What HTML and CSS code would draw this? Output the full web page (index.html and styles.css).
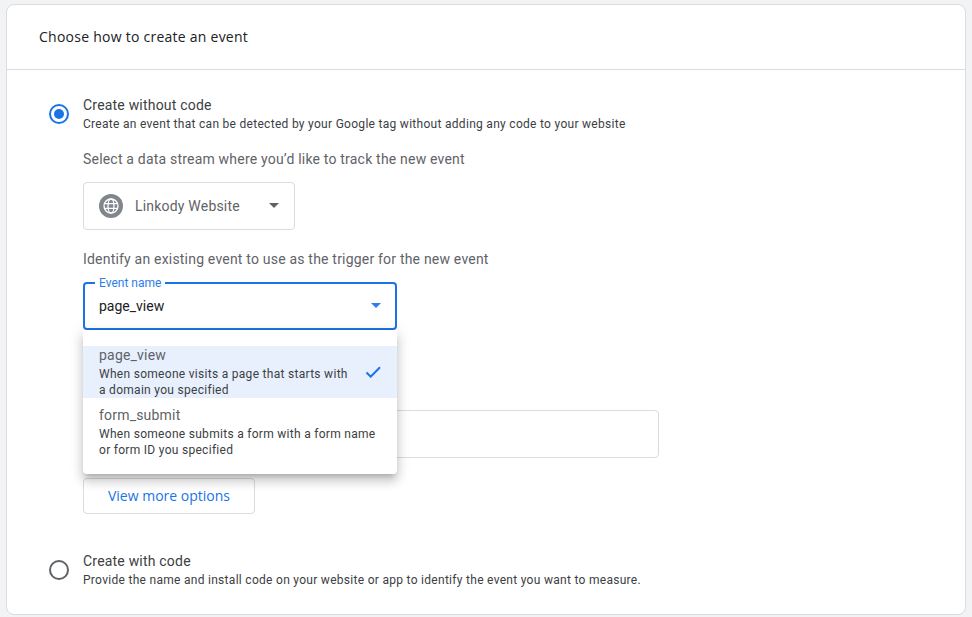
FILE: index.html
```html
<!DOCTYPE html>
<html lang="en">
<head>
    <meta charset="UTF-8">
    <title>Choose how to create an event</title>
    <link rel="stylesheet" href="styles.css">
</head>
<body>
    <div class="card">
        <div class="card-head">Choose how to create an event</div>
        <div class="card-body">
            <div class="option">
                <span class="radio on"></span>
                <div class="option-main">
                    <p class="option-title">Create without code</p>
                    <p class="option-sub">Create an event that can be detected by your Google tag without adding any code to your website</p>
                    <p class="prompt first">Select a data stream where you’d like to track the new event</p>
                    <div class="select stream">
                        <svg class="globe" width="24" height="24" viewBox="0 0 24 24">
                            <circle cx="12" cy="12" r="12" fill="#80868b"/>
                            <g fill="none" stroke="#fff" stroke-width="1.3">
                                <circle cx="12" cy="12" r="7"/>
                                <ellipse cx="12" cy="12" rx="3" ry="7"/>
                                <path d="M5.6 9.6h12.8M5.6 14.4h12.8"/>
                            </g>
                        </svg>
                        <span class="select-text">Linkody Website</span>
                        <span class="caret"></span>
                    </div>
                    <p class="prompt">Identify an existing event to use as the trigger for the new event</p>
                    <div class="field-wrap">
                        <div class="select event">
                            <span class="field-label">Event name</span>
                            <span class="event-value">page_view</span>
                            <span class="caret blue"></span>
                        </div>
                        <div class="menu">
                            <div class="menu-item selected">
                                <div class="item-text">
                                    <p class="item-name">page_view</p>
                                    <p class="item-desc">When someone visits a page that starts with a domain you specified</p>
                                </div>
                                <svg class="check" width="16" height="12" viewBox="0 0 16 12">
                                    <path d="M1.5 6.5l4.2 4.2L15 1.3" fill="none" stroke="#1a73e8" stroke-width="2"/>
                                </svg>
                            </div>
                            <div class="menu-item">
                                <div class="item-text">
                                    <p class="item-name">form_submit</p>
                                    <p class="item-desc">When someone submits a form with a form name or form ID you specified</p>
                                </div>
                            </div>
                        </div>
                    </div>
                    <div class="blank-input"></div>
                    <button class="more-btn">View more options</button>
                </div>
            </div>
            <div class="option second">
                <span class="radio"></span>
                <div class="option-main">
                    <p class="option-title">Create with code</p>
                    <p class="option-sub">Provide the name and install code on your website or app to identify the event you want to measure.</p>
                </div>
            </div>
        </div>
    </div>
</body>
</html>
```

FILE: styles.css
```css
body,p{ margin: 0;}
body{
    height: 617px;
    padding: 4px 6px 2px;
    box-sizing: border-box;
    overflow: hidden;
    background-color: #f1f3f4;
    font-family: Roboto, "Liberation Sans", sans-serif;
    color: #3c4043;
}
.card{
    height: 611px;
    box-sizing: border-box;
    background-color: #fff;
    border: 1px solid #dadce0;
    border-radius: 8px;
}
.card-head{
    height: 65px;
    box-sizing: border-box;
    padding-left: 32px;
    border-bottom: 1px solid #dadce0;
    line-height: 64px;
    font-family: "Open Sans", sans-serif;
    font-size: 14px;
    font-weight: 500;
    letter-spacing: .25px;
    color: #202124;
}
.card-body{
    padding: 25px 0 0 42px;
}
.option{
    display: flex;
    gap: 14px;
}
.option.second{
    margin-top: 37px;
}
.radio{
    flex: none;
    display: flex;
    align-items: center;
    justify-content: center;
    width: 20px;
    height: 20px;
    box-sizing: border-box;
    margin-top: 9px;
    border: 2px solid #5f6368;
    border-radius: 50%;
}
.radio.on{
    border-color: #1a73e8;
}
.radio.on::after{
    content: "";
    width: 10px;
    height: 10px;
    border-radius: 50%;
    background-color: #1a73e8;
}
.option-title{
    font-size: 14px;
    line-height: 20px;
    letter-spacing: .2px;
}
.option-sub{
    font-size: 12px;
    line-height: 18px;
    letter-spacing: .29px;
}
.prompt{
    margin: 19px 0 13px;
    font-size: 14px;
    line-height: 20px;
    letter-spacing: .2px;
    color: #5f6368;
}
.prompt.first{
    margin-top: 16px;
}
.select{
    display: flex;
    align-items: center;
    box-sizing: border-box;
    height: 48px;
    padding-bottom: 1px;
    border-radius: 4px;
}
.stream{
    width: 212px;
    padding-left: 15px;
    padding-right: 15px;
    border: 1px solid #dadce0;
}
.globe{
    flex: none;
    margin-right: 12px;
}
.select-text{
    font-size: 14px;
    letter-spacing: .2px;
    color: #5f6368;
}
.caret{
    width: 0;
    height: 0;
    margin-left: auto;
    border-left: 5px solid transparent;
    border-right: 5px solid transparent;
    border-top: 5px solid #5f6368;
}
.caret.blue{
    border-top-color: #2b7de9;
}
.field-wrap{
    position: relative;
    width: 314px;
}
.event{
    position: relative;
    padding-left: 14px;
    padding-right: 14px;
    border: 2px solid #1a73e8;
}
.field-label{
    position: absolute;
    top: -9px;
    left: 10px;
    padding: 0 4px;
    background-color: #fff;
    font-size: 12px;
    line-height: 16px;
    color: #2b7de9;
}
.event-value{
    font-size: 14px;
    color: #202124;
}
.menu{
    position: absolute;
    top: 48px;
    left: 0;
    width: 100%;
    padding: 16px 0;
    box-sizing: border-box;
    background-color: #fff;
    border-radius: 0 0 4px 4px;
    box-shadow: 0 5px 5px -3px rgba(0,0,0,.18), 0 8px 10px 1px rgba(0,0,0,.12), 0 3px 14px 2px rgba(0,0,0,.1);
}
.menu-item{
    display: flex;
    align-items: center;
    padding: 8px 16px 0;
}
.menu-item.selected{
    height: 52px;
    box-sizing: border-box;
    padding-top: 0;
    background-color: #e8f0fe;
}
.item-text{
    flex: 1;
}
.item-name{
    margin-bottom: 2px;
    font-size: 14px;
    line-height: 18px;
    letter-spacing: .2px;
    color: #5f6368;
}
.item-desc{
    font-size: 12px;
    line-height: 16px;
    letter-spacing: .29px;
}
.check{
    flex: none;
    margin-left: 14px;
}
.blank-input{
    width: 576px;
    height: 48px;
    box-sizing: border-box;
    margin-top: 80px;
    border: 1px solid #dadce0;
    border-radius: 4px;
}
.more-btn{
    display: block;
    width: 172px;
    height: 36px;
    margin-top: 20px;
    padding: 0 0 2px;
    background-color: #fff;
    border: 1px solid #dadce0;
    border-radius: 4px;
    font-family: "Open Sans", sans-serif;
    font-size: 14px;
    font-weight: 500;
    color: #1a73e8;
}
```
